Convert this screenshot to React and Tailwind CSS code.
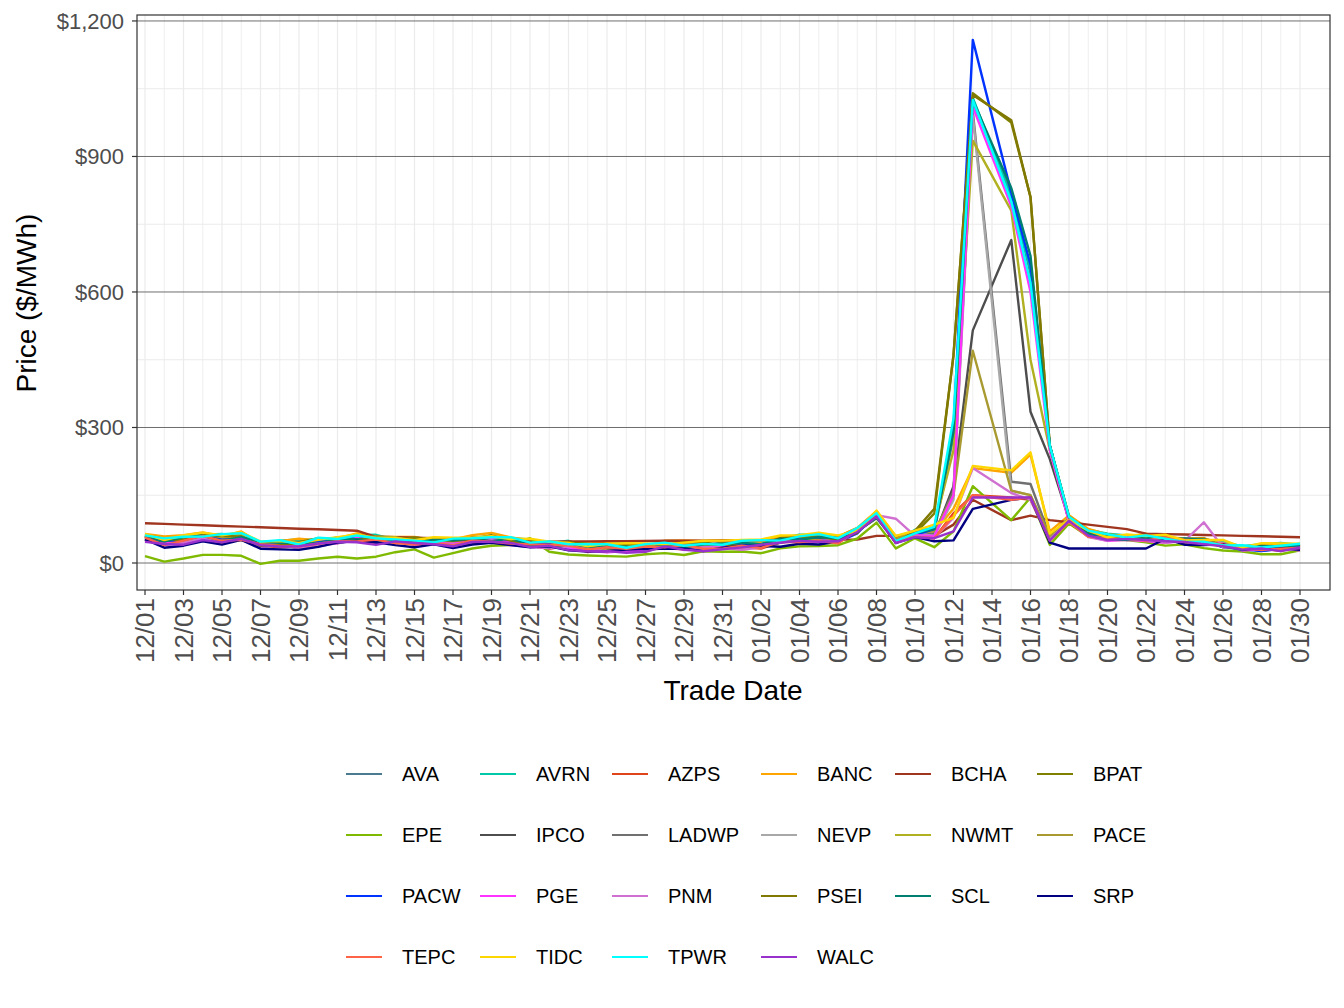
import React from 'react';

const W = 1344;
const X0 = 145;
const DX = 19.25;
const Y0 = 563;
const SY = 0.4517;
const px = (k) => X0 + k * DX;
const py = (v) => Y0 - v * SY;
const FONT = '"Liberation Sans", Arial, sans-serif';

const series = [
  ['AVA', '#4a7b91'], ['AVRN', '#00c9a7'], ['AZPS', '#e0441a'], ['BANC', '#ffa500'], ['BCHA', '#a0351f'], ['BPAT', '#808000'],
  ['EPE', '#7fba00'], ['IPCO', '#4d4d4d'], ['LADWP', '#707070'], ['NEVP', '#a8a8a8'], ['NWMT', '#b0b020'], ['PACE', '#a89a30'],
  ['PACW', '#0033ff'], ['PGE', '#ff33ff'], ['PNM', '#d070d0'], ['PSEI', '#807800'], ['SCL', '#008070'], ['SRP', '#000080'],
  ['TEPC', '#ff6347'], ['TIDC', '#ffd700'], ['TPWR', '#00ffff'], ['WALC', '#9932cc'],
];

// shared baseline shape
const base = [
  55, 45, 50, 58, 52, 55, 40, 42, 40, 45, 48, 52, 50, 48, 46, 45, 45, 50, 52, 48,
  40, 38, 36, 32, 32, 32, 33, 36, 36, 36, 36, 38, 40, 48, 52, 52, 50, 70, 105, 48,
  65, 72, 0, 0, 0, 0, 0, 60, 95, 65, 55, 55, 55, 52, 48, 48, 40, 32, 32, 34, 35,
];

// spike overrides: [day41, 42, 43, 45, 46, 47]
const spikes = {
  AVA: [70, 280, 1020, 820, 640, 260], AVRN: [75, 290, 1030, 810, 650, 260], AZPS: [55, 110, 150, 145, 140, 50],
  BANC: [70, 120, 210, 200, 240, 70], BCHA: [60, 85, 140, 95, 105, 95], BPAT: [110, 460, 1040, 975, 810, 260],
  EPE: [35, 70, 170, 95, 145, 40], IPCO: [60, 170, 515, 715, 335, 230], LADWP: [65, 160, 1000, 180, 175, 60],
  NEVP: [60, 140, 990, 160, 150, 55], NWMT: [80, 250, 935, 780, 450, 250], PACE: [70, 150, 470, 160, 150, 60],
  PACW: [75, 300, 1158, 820, 660, 260], PGE: [60, 150, 1010, 790, 600, 250], PNM: [55, 100, 210, 155, 140, 50],
  PSEI: [120, 460, 1036, 980, 810, 260], SCL: [75, 290, 1025, 830, 680, 260], SRP: [48, 50, 120, 140, 145, 45],
  TEPC: [55, 105, 150, 140, 145, 50], TIDC: [85, 100, 215, 205, 245, 65], TPWR: [80, 320, 1025, 800, 620, 260],
  WALC: [55, 70, 145, 145, 145, 50],
};

const offs = {
  AVA: 5, AVRN: 12, AZPS: -5, BANC: 15, BCHA: 0, BPAT: 8, EPE: -25, IPCO: 0, LADWP: 2, NEVP: 0, NWMT: 6,
  PACE: 4, PACW: 0, PGE: -4, PNM: -6, PSEI: 6, SCL: 3, SRP: -10, TEPC: -2, TIDC: 16, TPWR: 10, WALC: -8,
};

function rnd(seed) {
  const x = Math.sin(seed * 12.9898) * 43758.5453;
  return x - Math.floor(x);
}

function valuesFor(name, idx) {
  const pts = [];
  for (let k = 0; k <= 60; k++) {
    if (k === 44) continue;
    const si = { 41: 0, 42: 1, 43: 2, 45: 3, 46: 4, 47: 5 }[k];
    let v;
    if (si !== undefined) v = spikes[name][si];
    else if (name === 'BCHA') {
      v = k < 12 ? 88 - k * 1.5 : k < 20 ? 58 - (k - 12) : k < 38 ? 47 + (k - 20) * 0.3 : k < 41 ? 60 : k < 52 ? 90 - (k - 48) * 5 : 65 - (k - 52) * 1;
    } else if (name === 'EPE' && k < 22) {
      v = [15, 3, 10, 18, 18, 16, -2, 5, 5, 10, 14, 10, 14, 24, 30, 12, 22, 32, 38, 40, 55, 25][k];
    } else {
      v = base[k] + offs[name] * (k < 36 ? 0.6 : 0.4) + (rnd(idx * 97 + k) - 0.5) * 12;
      if (name === 'SRP' && k > 47 && k < 53) v = 32;
      if (name === 'PNM' && k === 55) v = 90;
      if (name === 'PNM' && k === 39) v = 98;
    }
    pts.push([px(k), py(v)]);
  }
  return pts.map((p) => p[0].toFixed(1) + ',' + p[1].toFixed(1)).join(' ');
}

const labels = [];
for (let k = 0; k <= 60; k += 2) {
  const d = new Date(2021, 11, 1 + k);
  labels.push([k, String(d.getMonth() + 1).padStart(2, '0') + '/' + String(d.getDate()).padStart(2, '0')]);
}

const Chart = () => (
  <svg width={W} height={720} className="block" style={{ fontFamily: FONT }}>
    {[150, 450, 750, 1050].map((v) => (
      <line key={v} x1={137} x2={1330} y1={py(v)} y2={py(v)} stroke="#ebebeb" strokeWidth="1" />
    ))}
    {Array.from({ length: 61 }, (_, k) => (
      <line key={k} x1={px(k)} x2={px(k)} y1={15} y2={590} stroke="#ebebeb" strokeWidth={k % 2 === 0 ? 1.2 : 0.8} />
    ))}
    {[0, 300, 600, 900, 1200].map((v) => (
      <line key={v} x1={137} x2={1330} y1={py(v)} y2={py(v)} stroke="#6e6e6e" strokeWidth="1" />
    ))}
    {series.map(([n, c], i) => (
      <polyline key={n} points={valuesFor(n, i)} fill="none" stroke={c} strokeWidth="2.4" strokeLinejoin="round" />
    ))}
    <rect x={137} y={15} width={1193} height={575} fill="none" stroke="#333" strokeWidth="1.2" />
    {[0, 300, 600, 900, 1200].map((v) => (
      <g key={v}>
        <line x1={132} x2={137} y1={py(v)} y2={py(v)} stroke="#333" strokeWidth="1.2" />
        <text x={124} y={py(v) + 8} textAnchor="end" fontSize="22" fill="#4d4d4d">
          {'$' + v.toLocaleString('en-US')}
        </text>
      </g>
    ))}
    {labels.map(([k, t]) => (
      <g key={k}>
        <line x1={px(k)} x2={px(k)} y1={590} y2={595} stroke="#333" strokeWidth="1.2" />
        <text transform={`translate(${px(k) + 9},598) rotate(-90)`} textAnchor="end" fontSize="26" fill="#4d4d4d">
          {t}
        </text>
      </g>
    ))}
    <text x={733} y={700} textAnchor="middle" fontSize="28" fill="#000">Trade Date</text>
    <text transform="translate(36,303) rotate(-90)" textAnchor="middle" fontSize="28" fill="#000">Price ($/MWh)</text>
  </svg>
);

export default function App() {
  return (
    <div className="w-[1344px] h-[1008px] bg-white" style={{ fontFamily: FONT }}>
      <Chart />
      <div className="pl-[346px] pt-[23px] grid grid-cols-[134px_132px_149px_134px_142px_auto]">
        {series.map(([n, c]) => (
          <div key={n} className="flex items-center h-[61px]">
            <span className="block w-[36px] h-[2px]" style={{ background: c }} />
            <span className="ml-[20px] text-[20px] text-black">{n}</span>
          </div>
        ))}
      </div>
    </div>
  );
}
